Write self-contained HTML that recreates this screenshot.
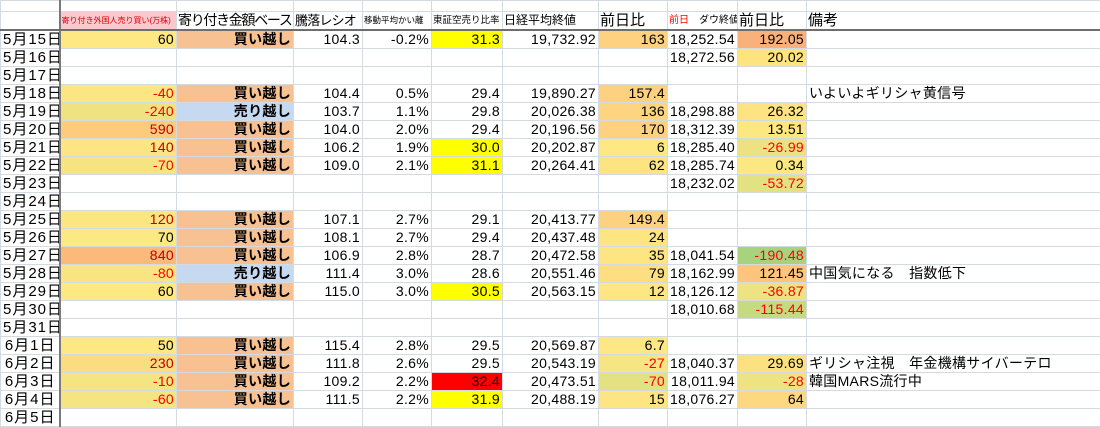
<!DOCTYPE html>
<html><head><meta charset="utf-8"><style>
body{margin:0;background:#fff;width:1100px;height:415px;overflow:hidden;font-family:"Liberation Sans","Noto Sans CJK JP",sans-serif;}
table{border-collapse:collapse;table-layout:fixed;position:absolute;left:0;top:0;width:1100px;}
td{border:1px solid #d5d9e0;padding:0 2px;height:17px;font-size:14px;text-align:right;white-space:nowrap;overflow:hidden;line-height:17px;color:#000;letter-spacing:0.3px;}
td.a{border-right:2px solid #7a7a7a;font-size:15px;padding-right:3px;letter-spacing:1px;}
tr.h0 td{height:10px;line-height:10px;}
tr.h1 td{border-bottom:2px solid #6e6e6e;text-align:left;font-size:15px;letter-spacing:0;padding:0 1px;}
td.c{font-weight:bold;font-size:14px;font-family:"Noto Sans CJK JP",sans-serif;}
td.k{text-align:left;font-size:14px;}
.r{color:#ff0000}.dr{color:#c00000}
</style></head><body>
<table>
<colgroup><col style="width:59px"><col style="width:117px"><col style="width:117px"><col style="width:69px"><col style="width:69px"><col style="width:71px"><col style="width:96px"><col style="width:69px"><col style="width:70px"><col style="width:69px"><col style="width:294px"></colgroup>
<tr class="h0"><td class="a"></td><td></td><td></td><td></td><td></td><td></td><td></td><td></td><td></td><td></td><td></td></tr>
<tr class="h1"><td class="a" style="border-bottom:2px solid #6e6e6e"></td><td style="background:#fbc8d0;color:#e00000;font-size:8px">寄り付き外国人売り買い(万株)</td><td style="font-size:14px;letter-spacing:-1.3px">寄り付き金額ベース</td><td style="font-size:13px;letter-spacing:-0.8px">騰落レシオ</td><td style="font-size:8.5px">移動平均かい離</td><td style="font-size:9.5px">東証空売り比率</td><td style="font-size:12px">日経平均終値</td><td>前日比</td><td style="font-size:10px"><span style="color:#f00">前日</span>　ダウ終値</td><td>前日比</td><td>備考</td></tr>
<tr><td class="a">5月15日</td><td style="background:#fde883">60</td><td class="c" style="background:#f8c191">買い越し</td><td>104.3</td><td>-0.2%</td><td style="background:#ffff00">31.3</td><td>19,732.92</td><td style="background:#fdd17f">163</td><td>18,252.54</td><td style="background:#f9b07a">192.05</td><td class="k"></td></tr>
<tr><td class="a">5月16日</td><td></td><td></td><td></td><td></td><td></td><td></td><td></td><td>18,272.56</td><td style="background:#fde47f">20.02</td><td class="k"></td></tr>
<tr><td class="a">5月17日</td><td></td><td></td><td></td><td></td><td></td><td></td><td></td><td></td><td></td><td class="k"></td></tr>
<tr><td class="a">5月18日</td><td class="r" style="background:#fbe683">-40</td><td class="c" style="background:#f8c191">買い越し</td><td>104.4</td><td>0.5%</td><td>29.4</td><td>19,890.27</td><td style="background:#fdd17f">157.4</td><td></td><td></td><td class="k">いよいよギリシャ黄信号</td></tr>
<tr><td class="a">5月19日</td><td class="r" style="background:#efe381">-240</td><td class="c" style="background:#c5d9f1">売り越し</td><td>103.7</td><td>1.1%</td><td>29.8</td><td>20,026.38</td><td style="background:#fdd580">136</td><td>18,298.88</td><td style="background:#fde381">26.32</td><td class="k"></td></tr>
<tr><td class="a">5月20日</td><td class="dr" style="background:#fdcb7e">590</td><td class="c" style="background:#f8c191">買い越し</td><td>104.0</td><td>2.0%</td><td>29.4</td><td>20,196.56</td><td style="background:#fdd17f">170</td><td>18,312.39</td><td style="background:#fde781">13.51</td><td class="k"></td></tr>
<tr><td class="a">5月21日</td><td class="dr" style="background:#fce582">140</td><td class="c" style="background:#f8c191">買い越し</td><td>106.2</td><td>1.9%</td><td style="background:#ffff00">30.0</td><td>20,202.87</td><td style="background:#fde883">6</td><td>18,285.40</td><td class="r" style="background:#ede282">-26.99</td><td class="k"></td></tr>
<tr><td class="a">5月22日</td><td class="r" style="background:#f5e582">-70</td><td class="c" style="background:#f8c191">買い越し</td><td>109.0</td><td>2.1%</td><td style="background:#ffff00">31.1</td><td>20,264.41</td><td style="background:#fde482">62</td><td>18,285.74</td><td style="background:#fbe883">0.34</td><td class="k"></td></tr>
<tr><td class="a">5月23日</td><td></td><td></td><td></td><td></td><td></td><td></td><td></td><td>18,232.02</td><td class="r" style="background:#e2e283">-53.72</td><td class="k"></td></tr>
<tr><td class="a">5月24日</td><td></td><td></td><td></td><td></td><td></td><td></td><td></td><td></td><td></td><td class="k"></td></tr>
<tr><td class="a">5月25日</td><td class="dr" style="background:#fde682">120</td><td class="c" style="background:#f8c191">買い越し</td><td>107.1</td><td>2.7%</td><td>29.1</td><td>20,413.77</td><td style="background:#fdd17f">149.4</td><td></td><td></td><td class="k"></td></tr>
<tr><td class="a">5月26日</td><td style="background:#fde983">70</td><td class="c" style="background:#f8c191">買い越し</td><td>108.1</td><td>2.7%</td><td>29.4</td><td>20,437.48</td><td style="background:#fde582">24</td><td></td><td></td><td class="k"></td></tr>
<tr><td class="a">5月27日</td><td class="dr" style="background:#fbba79">840</td><td class="c" style="background:#f8c191">買い越し</td><td>106.9</td><td>2.8%</td><td>28.7</td><td>20,472.58</td><td style="background:#fde582">35</td><td>18,041.54</td><td class="r" style="background:#a9d27f">-190.48</td><td class="k"></td></tr>
<tr><td class="a">5月28日</td><td class="r" style="background:#f8e582">-80</td><td class="c" style="background:#c5d9f1">売り越し</td><td>111.4</td><td>3.0%</td><td>28.6</td><td>20,551.46</td><td style="background:#fddf81">79</td><td>18,162.99</td><td style="background:#fcc47d">121.45</td><td class="k">中国気になる　指数低下</td></tr>
<tr><td class="a">5月29日</td><td style="background:#fde882">60</td><td class="c" style="background:#f8c191">買い越し</td><td>115.0</td><td>3.0%</td><td style="background:#ffff00">30.5</td><td>20,563.15</td><td style="background:#fde683">12</td><td>18,126.12</td><td class="r" style="background:#eee382">-36.87</td><td class="k"></td></tr>
<tr><td class="a">5月30日</td><td></td><td></td><td></td><td></td><td></td><td></td><td></td><td>18,010.68</td><td class="r" style="background:#c6db80">-115.44</td><td class="k"></td></tr>
<tr><td class="a">5月31日</td><td></td><td></td><td></td><td></td><td></td><td></td><td></td><td></td><td></td><td class="k"></td></tr>
<tr><td class="a">6月1日</td><td style="background:#fde882">50</td><td class="c" style="background:#f8c191">買い越し</td><td>115.4</td><td>2.8%</td><td>29.5</td><td>20,569.87</td><td style="background:#fde883">6.7</td><td></td><td></td><td class="k"></td></tr>
<tr><td class="a">6月2日</td><td class="dr" style="background:#fcdc80">230</td><td class="c" style="background:#f8c191">買い越し</td><td>111.8</td><td>2.6%</td><td>29.5</td><td>20,543.19</td><td class="r" style="background:#f5e683">-27</td><td>18,040.37</td><td style="background:#fde181">29.69</td><td class="k">ギリシャ注視　年金機構サイバーテロ</td></tr>
<tr><td class="a">6月3日</td><td class="r" style="background:#f4e482">-10</td><td class="c" style="background:#f8c191">買い越し</td><td>109.2</td><td>2.2%</td><td style="background:#ff0000">32.4</td><td>20,473.51</td><td class="r" style="background:#e2e283">-70</td><td>18,011.94</td><td class="r" style="background:#ede382">-28</td><td class="k">韓国MARS流行中</td></tr>
<tr><td class="a">6月4日</td><td class="r" style="background:#f5e482">-60</td><td class="c" style="background:#f8c191">買い越し</td><td>111.5</td><td>2.2%</td><td style="background:#ffff00">31.9</td><td>20,488.19</td><td style="background:#fde582">15</td><td>18,076.27</td><td style="background:#fdd880">64</td><td class="k"></td></tr>
<tr><td class="a">6月5日</td><td></td><td></td><td></td><td></td><td></td><td></td><td></td><td></td><td></td><td class="k"></td></tr>
</table>
</body></html>
